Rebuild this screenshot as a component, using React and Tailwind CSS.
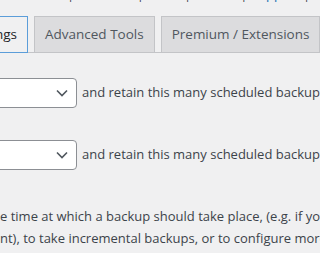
export default function App() {
  return (
    <div className="w-[320px] h-[253px] overflow-hidden bg-[#f0f0f1] text-[#3c434a] text-[13px] font-['Open_Sans',sans-serif]">
      <div className="h-[16px] overflow-hidden">
        <div className="-mt-[14px] leading-[16px] whitespace-nowrap -ml-[40px]">
          <span className="text-[#2271b1]">UpdraftPlus.Com</span> | <span className="text-[#2271b1]">Premium</span> |{" "}
          <span className="text-[#2271b1]">News</span> | <span className="text-[#2271b1]">Twitter</span> |{" "}
          <span className="text-[#2271b1]">Support</span> | <span className="text-[#2271b1]">Newsletter sign-up</span>
        </div>
      </div>

      <div className="flex items-end h-[37px] border-b border-[#c3c4c7] whitespace-nowrap">
        <div className="-ml-[60px] w-[88px] h-[37px] -mb-px flex items-center justify-end pr-[10px] bg-[#f0f0f1] border border-[#5b9dd9] text-[13.5px] text-[#1d2327]">
          Backup Settings
        </div>
        <div className="ml-[6px] h-[36px] px-[10px] flex items-center bg-[#dcdcde] border border-b-0 border-[#c3c4c7] text-[13.5px] text-[#50575e]">
          Advanced Tools
        </div>
        <div className="ml-[6px] h-[36px] px-[10px] flex items-center bg-[#dcdcde] border border-b-0 border-[#c3c4c7] text-[13.5px] text-[#50575e]">
          Premium / Extensions
        </div>
      </div>

      <div className="mt-[25px] flex items-center whitespace-nowrap">
        <div className="-ml-[24px] w-[101px] h-[30px] shrink-0 flex items-center justify-end pr-[8px] bg-white border border-[#8c8f94] rounded-[4px]">
          <svg width="12" height="8" viewBox="0 0 12 8" fill="none" stroke="#50575e" strokeWidth="1.6">
            <path d="M1 1.5l5 5 5-5" />
          </svg>
        </div>
        <span className="ml-[5px]">and retain this many scheduled backups</span>
      </div>

      <div className="mt-[32px] flex items-center whitespace-nowrap">
        <div className="-ml-[24px] w-[101px] h-[30px] shrink-0 flex items-center justify-end pr-[8px] bg-white border border-[#8c8f94] rounded-[4px]">
          <svg width="12" height="8" viewBox="0 0 12 8" fill="none" stroke="#50575e" strokeWidth="1.6">
            <path d="M1 1.5l5 5 5-5" />
          </svg>
        </div>
        <span className="ml-[5px]">and retain this many scheduled backups</span>
      </div>

      <div className="mt-[35px] leading-[22px] whitespace-nowrap">
        <div>e time at which a backup should take place, (e.g. if your server is busy at day</div>
        <div>nt), to take incremental backups, or to configure more complex schedules</div>
      </div>
    </div>
  );
}
